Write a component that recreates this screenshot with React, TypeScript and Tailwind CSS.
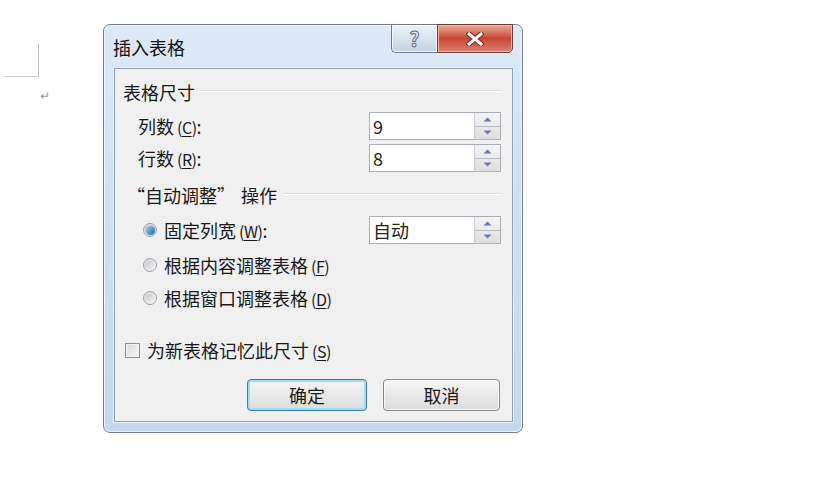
import React from "react";

const font = { fontFamily: '"Noto Sans CJK SC", "Noto Sans", sans-serif' };

function Key({ k }: { k: string }) {
  return (
    <span className="ml-[3px] text-[16px] tracking-[-0.5px]">
      (<span className="underline underline-offset-2">{k}</span>)
    </span>
  );
}

function GroupHeader({ children }: { children: React.ReactNode }) {
  return (
    <div className="flex h-[22px] items-center">
      <span className="whitespace-nowrap text-[18px] leading-[22px]">{children}</span>
      <div className="ml-[7px] mt-[-2px] h-[2px] flex-1 border-t border-b border-t-[#d5dfe5] border-b-white" />
    </div>
  );
}

function Spinner() {
  return (
    <div className="flex w-[26px] flex-col border-l border-[#c9cdd3] bg-gradient-to-b from-[#f4f4f4] to-[#dedede]">
      <div className="flex flex-1 items-center justify-center border-b border-[#b8bcc4]">
        <svg width="9" height="5" viewBox="0 0 9 5">
          <path d="M0.5 4.5 L4.5 0.5 L8.5 4.5 Z" fill="#6878b4" />
        </svg>
      </div>
      <div className="flex flex-1 items-center justify-center">
        <svg width="9" height="5" viewBox="0 0 9 5">
          <path d="M0.5 0.5 L4.5 4.5 L8.5 0.5 Z" fill="#6878b4" />
        </svg>
      </div>
    </div>
  );
}

function SpinInput({ value }: { value: string }) {
  return (
    <div className="flex h-[28px] w-[132px] border border-[#a9adb5] bg-white">
      <div className="flex flex-1 items-center pl-[3px] text-[18px] text-[#222]">{value}</div>
      <Spinner />
    </div>
  );
}

function Radio({ checked }: { checked?: boolean }) {
  return (
    <div className="flex h-[14px] w-[14px] items-center justify-center rounded-full border border-[#9aa2ad] bg-gradient-to-br from-[#d4d4d4] to-[#f7f7f7]">
      {checked ? (
        <div className="h-[9px] w-[9px] rounded-full bg-gradient-to-br from-[#9ad6f6] to-[#1a64a0] shadow-[0_0_1px_#0c4a80]" />
      ) : (
        <div className="h-[8px] w-[8px] rounded-full bg-gradient-to-br from-[#c8c8c8] to-[#eeeeee]" />
      )}
    </div>
  );
}

function Button({ children, primary, w }: { children: React.ReactNode; primary?: boolean; w: string }) {
  return (
    <div
      className={`flex h-[32px] items-center justify-center rounded-[4px] border bg-gradient-to-b from-[#f5f5f5] to-[#dcdcdc] text-[18px] ${w} ${
        primary
          ? "border-[#3d7bad] shadow-[inset_0_0_0_2px_#a6d9f4]"
          : "border-[#8a8a8a] shadow-[inset_0_0_0_1px_#f8f8f8]"
      }`}
    >
      {children}
    </div>
  );
}

export default function App() {
  return (
    <div className="relative h-[478px] w-[814px] overflow-hidden bg-white text-[#1a1a1a]" style={font}>
      {/* document margin marks */}
      <div className="absolute left-[5px] top-[44px] h-[33px] w-[34px] border-b border-r border-[#c4c4c4]" />
      <div className="absolute left-[40px] top-[86px] text-[12px] text-[#9a9a9a]">↵</div>

      <div className="pl-[103px] pt-[24px]">
        <div className="flex h-[409px] w-[420px] flex-col rounded-[7px] border border-[#6f7f91] bg-gradient-to-b from-[#dde9f6] via-[#cddff1] to-[#c5d9ee] shadow-[inset_0_0_0_1px_#eef5fc]">
          {/* title bar */}
          <div className="flex h-[43px] items-start">
            <div className="pl-[9px] pt-[10px] text-[18px] leading-[24px] text-[#111]">插入表格</div>
            <div className="ml-auto mr-[9px] mt-[-1px] flex h-[29px]">
              <div className="flex w-[46px] items-center justify-center rounded-bl-[5px] border border-r-0 border-[#6d7b8f] bg-gradient-to-b from-[#eef3f9] via-[#d9e3ee] to-[#c3d2e2] shadow-[inset_0_0_0_1px_#f4f8fc]">
                <span
                  className="text-[20px] font-bold leading-none text-[#e9eef4]"
                  style={{ WebkitTextStroke: "1px #5d6d82" }}
                >
                  ?
                </span>
              </div>
              <div className="flex w-[76px] items-center justify-center rounded-br-[5px] border border-[#6b3a34] bg-gradient-to-b from-[#e8a89b] via-[#c9452f] to-[#d8806f] shadow-[inset_0_0_0_1px_#efb9ad]">
                <svg width="18" height="14" viewBox="0 0 18 14">
                  <path
                    d="M3 2 L15 12 M15 2 L3 12"
                    stroke="#5e2a23"
                    strokeWidth="5"
                    strokeLinecap="square"
                  />
                  <path
                    d="M3 2 L15 12 M15 2 L3 12"
                    stroke="#ffffff"
                    strokeWidth="3"
                    strokeLinecap="square"
                  />
                </svg>
              </div>
            </div>
          </div>

          {/* client area */}
          <div className="mb-[10px] ml-[10px] mr-[9px] flex flex-1 flex-col border border-[#8da0b6] bg-[#f0f0f0] pl-[8px] pr-[11px] shadow-[0_0_0_1px_#e6eef7]">
            <div className="mt-[12px]">
              <GroupHeader>表格尺寸</GroupHeader>
            </div>

            <div className="mt-[9px] flex h-[28px] items-center">
              <span className="ml-[15px] text-[18px]">
                列数<Key k="C" />:
              </span>
              <div className="ml-auto">
                <SpinInput value="9" />
              </div>
            </div>
            <div className="mt-[4px] flex h-[28px] items-center">
              <span className="ml-[15px] text-[18px]">
                行数<Key k="R" />:
              </span>
              <div className="ml-auto">
                <SpinInput value="8" />
              </div>
            </div>

            <div className="mt-[12px]">
              <GroupHeader>
                <span className="ml-[4px]">“自动调整”</span>
                <span className="ml-[6px]">操作</span>
              </GroupHeader>
            </div>

            <div className="mt-[10px] flex h-[28px] items-center">
              <div className="ml-[20px]">
                <Radio checked />
              </div>
              <span className="ml-[7px] text-[18px]">
                固定列宽<Key k="W" />:
              </span>
              <div className="ml-auto">
                <SpinInput value="自动" />
              </div>
            </div>
            <div className="mt-[9px] flex h-[24px] items-center">
              <div className="ml-[20px]">
                <Radio />
              </div>
              <span className="ml-[7px] text-[18px]">
                根据内容调整表格<Key k="F" />
              </span>
            </div>
            <div className="mt-[9px] flex h-[24px] items-center">
              <div className="ml-[20px]">
                <Radio />
              </div>
              <span className="ml-[7px] text-[18px]">
                根据窗口调整表格<Key k="D" />
              </span>
            </div>

            <div className="mt-[28px] flex h-[24px] items-center">
              <div className="ml-[2px] h-[15px] w-[15px] border border-[#8f8f8f] bg-gradient-to-br from-[#dcdcdc] to-[#f6f6f6] shadow-[inset_0_0_0_1px_#f2f2f2]" />
              <span className="ml-[7px] text-[18px]">
                为新表格记忆此尺寸<Key k="S" />
              </span>
            </div>

            <div className="mr-[1px] mt-[17px] flex justify-end gap-[16px]">
              <Button primary w="w-[120px]">
                确定
              </Button>
              <Button w="w-[117px]">取消</Button>
            </div>
          </div>
        </div>
      </div>
    </div>
  );
}
